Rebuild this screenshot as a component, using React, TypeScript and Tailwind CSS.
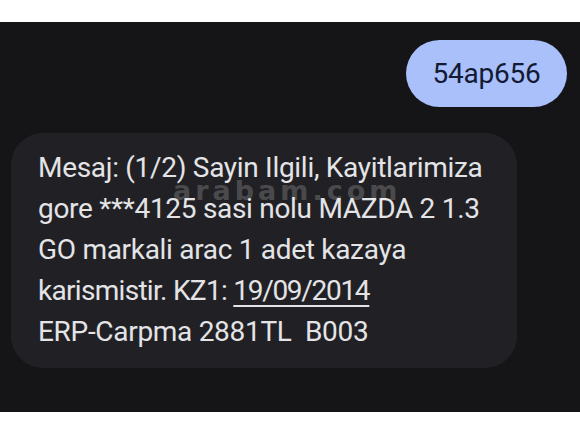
import React from 'react';

const lines = [
  'Mesaj: (1/2) Sayin Ilgili, Kayitlarimiza',
  'gore ***4125 sasi nolu MAZDA 2 1.3',
  'GO markali arac 1 adet kazaya',
];

export default function App() {
  return (
    <div className="w-[580px] h-[435px] bg-white flex flex-col" style={{ fontFamily: 'Roboto, "Noto Sans", sans-serif' }}>
      <div className="h-[22px] shrink-0 bg-white" />

      {/* Conversation */}
      <div className="h-[390px] shrink-0 bg-[#151518] flex flex-col px-[12px] pt-[18px]">
        <div className="flex justify-end pr-px">
          <div className="h-[67px] w-[161px] rounded-full bg-[#a9c0fb] flex items-center justify-center text-[28px] text-[#131a33] tracking-[-0.2px]">
            54ap656
          </div>
        </div>

        <div className="relative mt-[26px] w-[506px] h-[235px] -ml-px rounded-[32px] bg-[#212125] pl-[27px] pt-[14px] text-[28px] leading-[41px] text-[#e4e4e7] tracking-[-0.3px]">
          {lines.map((l) => (
            <div key={l} className="whitespace-nowrap">{l}</div>
          ))}
          <div className="whitespace-nowrap">
            <span className="tracking-[-0.7px]">karismistir. KZ1: </span>
            <span className="underline decoration-2 underline-offset-[5px] tracking-[-1.3px]">19/09/2014</span>
          </div>
          <div className="whitespace-pre">ERP-Carpma 2881TL  B003</div>

          {/* watermark */}
          <div
            className="absolute left-[162px] top-[37px] text-[27px] font-bold tracking-[4px] text-white/20 pointer-events-none select-none"
            style={{ fontFamily: '"DejaVu Sans", Verdana, sans-serif' }}
          >
            arabam.com
          </div>
        </div>
      </div>

      <div className="flex-1 bg-white" />
    </div>
  );
}
